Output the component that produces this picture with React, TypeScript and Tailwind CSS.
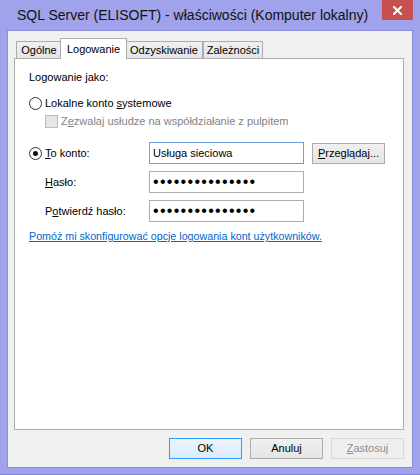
import React from "react";

function Radio({ checked }: { checked?: boolean }) {
  return (
    <div className="w-[13px] h-[13px] rounded-full border border-[#333333] bg-white flex items-center justify-center shrink-0">
      {checked && <div className="w-[5px] h-[5px] rounded-full bg-[#111111]" />}
    </div>
  );
}

function Tab({ label, width, active }: { label: string; width: string; active?: boolean }) {
  if (active) {
    return (
      <div
        className={`relative z-10 -mx-[2px] -mb-px h-[21px] ${width} bg-white border border-b-0 border-[#acacac] flex items-start justify-center pt-[2px] text-[11px] text-black`}
      >
        {label}
      </div>
    );
  }
  return (
    <div
      className={`h-[17px] ${width} bg-gradient-to-b from-[#f0f0f0] to-[#e5e5e5] border border-b-0 border-[#acacac] flex items-center justify-center text-[11px] text-black`}
    >
      {label}
    </div>
  );
}

function PasswordBox() {
  return (
    <div className="w-[155px] h-[22px] border border-[#abadb3] bg-white flex items-center pl-[3px] text-[16px] leading-none tracking-[1.3px] text-black">
      •••••••••••••••
    </div>
  );
}

function DlgButton({ children, variant }: { children: React.ReactNode; variant?: "default" | "disabled" }) {
  const base = "w-[73px] h-[21px] flex items-center justify-center text-[11px] border";
  if (variant === "default") {
    return <div className={`${base} border-[#3399ff] bg-gradient-to-b from-[#ecf4fc] to-[#dcecfc] text-black`}>{children}</div>;
  }
  if (variant === "disabled") {
    return <div className={`${base} border-[#d9d9d9] bg-[#efefef] text-[#8d8d8d]`}>{children}</div>;
  }
  return <div className={`${base} border-[#acacac] bg-gradient-to-b from-[#f0f0f0] to-[#e5e5e5] text-black`}>{children}</div>;
}

export default function App() {
  return (
    <div className="w-[420px] h-[475px] bg-[#a0a2ec] border-b border-[#8083cf] flex flex-col font-['Liberation_Sans',Arial,sans-serif] overflow-hidden">
      {/* Title bar */}
      <div className="h-[30px] flex items-start shrink-0">
        <div className="pl-[17px] pt-[7px] text-[14px] leading-[17px] text-[#111111] flex-1">
          SQL Server (ELISOFT) - właściwości (Komputer lokalny)
        </div>
        <div className="mr-[7px] w-[31px] h-[20px] bg-[#c75050] flex items-center justify-center">
          <svg width="9" height="9" viewBox="0 0 9 9">
            <path d="M1 1 L8 8 M8 1 L1 8" stroke="#ffffff" strokeWidth="2" strokeLinecap="square" />
          </svg>
        </div>
      </div>

      {/* Client area */}
      <div className="mx-[7px] h-[438px] border border-[#8b8dd8] bg-[#f0f0f0] flex flex-col">
        <div className="pt-[7px] ml-[6px] w-[390px]">
          {/* Tabs */}
          <div className="flex items-end h-[20px] pl-[2px]">
            <Tab label="Ogólne" width="w-[46px]" />
            <Tab label="Logowanie" width="w-[67px]" active />
            <Tab label="Odzyskiwanie" width="w-[78px]" />
            <Tab label="Zależności" width="w-[60px]" />
          </div>

          {/* Panel */}
          <div className="h-[372px] border border-[#adadad] bg-white pl-[14px] text-[11px] text-black">
            <div className="mt-[10px] h-[16px] flex items-center">Logowanie jako:</div>

            <div className="mt-[10px] h-[16px] flex items-center gap-[3px]">
              <Radio />
              <span>
                Lokalne konto <span className="underline">s</span>ystemowe
              </span>
            </div>

            <div className="mt-[2px] ml-[16px] h-[16px] flex items-center gap-[3px] text-[#838383]">
              <div className="w-[13px] h-[13px] border border-[#bcbcbc] bg-[#e6e6e6] shrink-0" />
              <span>
                Z<span className="underline">e</span>zwalaj usłudze na współdziałanie z pulpitem
              </span>
            </div>

            <div className="mt-[13px] h-[22px] flex items-center">
              <div className="w-[120px] flex items-center gap-[3px]">
                <Radio checked />
                <span>
                  <span className="underline">T</span>o konto:
                </span>
              </div>
              <div className="w-[155px] h-[22px] border border-[#6f9fd8] bg-white flex items-center pl-[3px]">
                Usługa sieciowa
              </div>
              <div className="ml-[8px] w-[73px] h-[21px] border border-[#acacac] bg-gradient-to-b from-[#f0f0f0] to-[#e5e5e5] flex items-center justify-center">
                <span>
                  <span className="underline">P</span>rzeglądaj...
                </span>
              </div>
            </div>

            <div className="mt-[7px] h-[22px] flex items-center">
              <div className="w-[120px] pl-[16px]">
                <span className="underline">H</span>asło:
              </div>
              <PasswordBox />
            </div>

            <div className="mt-[7px] h-[22px] flex items-center">
              <div className="w-[120px] pl-[16px]">
                P<span className="underline">o</span>twierdź hasło:
              </div>
              <PasswordBox />
            </div>

            <div className="mt-[6px] h-[16px] flex items-center">
              <span className="text-[10.7px] text-[#0066cc] underline">
                Pomóż mi skonfigurować opcje logowania kont użytkowników.
              </span>
            </div>
          </div>
        </div>

        {/* Dialog buttons */}
        <div className="mt-[8px] mr-[8px] flex justify-end gap-[8px]">
          <DlgButton variant="default">OK</DlgButton>
          <DlgButton>Anuluj</DlgButton>
          <DlgButton variant="disabled">
            <span>
              <span className="underline">Z</span>astosuj
            </span>
          </DlgButton>
        </div>
      </div>
    </div>
  );
}
